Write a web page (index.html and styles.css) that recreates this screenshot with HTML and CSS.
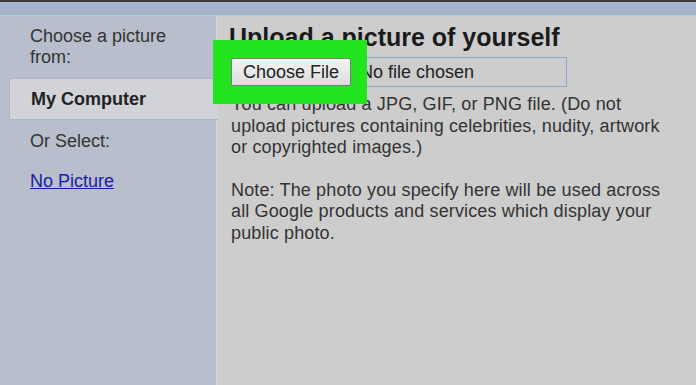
FILE: index.html
```html
<!DOCTYPE html>
<html lang="en">
<head>
  <meta charset="UTF-8">
  <meta name="viewport" content="width=device-width, initial-scale=1.0">
  <title>Upload a picture of yourself</title>
  <link rel="stylesheet" href="styles.css">
</head>
<body>
  <div class="topbar"></div>
  <div class="layout">
    <div class="sidebar">
      <p class="intro">Choose a picture<br>from:</p>
      <div class="tab">My Computer</div>
      <p class="label">Or Select:</p>
      <a class="link" href="#">No Picture</a>
    </div>
    <div class="main">
      <h1>Upload a picture of yourself</h1>
      <div class="file-field">
        <button class="file-btn">Choose File</button>
        <span class="file-name">No file chosen</span>
        <div class="highlight"></div>
      </div>
      <p class="info">You can upload a JPG, GIF, or PNG file. (Do not<br>upload pictures containing celebrities, nudity, artwork<br>or copyrighted images.)</p>
      <p class="info">Note: The photo you specify here will be used across<br>all Google products and services which display your<br>public photo.</p>
    </div>
  </div>
</body>
</html>
```

FILE: styles.css
```css
body {
  margin: 0;
  font-family: "Liberation Sans", Arial, sans-serif;
  background-color: #cdcdcd;
  color: #333;
  height: 385px;
  overflow: hidden;
}
.topbar {
  height: 13px;
  border-top: 2px solid #3c3c3c;
  background-color: #a6b4cd;
  border-bottom: 1px solid #c3cad6;
}
.layout {
  display: flex;
  height: 369px;
}
.sidebar {
  width: 216px;
  background-color: #b8becb;
  padding-top: 10px;
  box-sizing: border-box;
}
.intro {
  margin: 0 0 10px 30px;
  font-size: 18px;
  line-height: 21px;
}
.tab {
  margin-left: 9px;
  margin-right: -2px;
  height: 40px;
  line-height: 40px;
  padding-left: 21px;
  background-color: #d1d3d8;
  border: 1px solid #a9b6cc;
  border-right: none;
  font-size: 18px;
  font-weight: bold;
  color: #222;
  position: relative;
}
.label {
  margin: 11px 0 19px 30px;
  font-size: 18px;
  line-height: 21px;
}
.link {
  display: block;
  margin-left: 30px;
  font-size: 18px;
  line-height: 21px;
  color: #1c1ca8;
}
.main {
  flex: 1;
  border-left: 1px solid #d9d9d9;
  padding: 7px 0 0 12px;
}
h1 {
  margin: 0 0 6px;
  font-size: 25px;
  line-height: 28px;
  color: #1a1a1a;
}
.file-field {
  position: relative;
  width: 335px;
  height: 28px;
  border: 1px solid #8fa3c8;
  display: flex;
  align-items: center;
  gap: 9px;
  padding-left: 1px;
}
.file-btn {
  height: 28px;
  width: 120px;
  font-family: inherit;
  font-size: 18px;
  color: #222;
  background: linear-gradient(#f4f4f4, #dcdcdc);
  border: 1px solid #7a7a7a;
  border-radius: 2px;
  position: relative;
  z-index: 2;
}
.file-name {
  font-size: 18px;
  color: #222;
}
.highlight {
  position: absolute;
  left: -17px;
  top: -18px;
  width: 154px;
  height: 64px;
  background-color: #22e41f;
  z-index: 1;
}
.info {
  margin: 7px 0 21px 2px;
  font-size: 18px;
  line-height: 21.5px;
  letter-spacing: 0.14px;
}
```
